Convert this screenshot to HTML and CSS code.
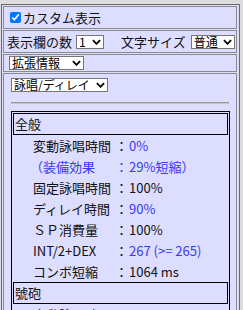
FILE: index.html
```html
<!DOCTYPE html>
<html lang="ja">
<head>
  <meta charset="UTF-8" />
  <meta name="viewport" content="width=device-width, initial-scale=1.0"/>
  <title>カスタム表示</title>
  <link rel="stylesheet" href="styles.css">
</head>
<body>
  <div class="panel">
    <div class="cell row-custom">
      <label><input type="checkbox" checked>カスタム表示</label>
    </div>

    <div class="cell row-opts">
      <span>表示欄の数</span>
      <span class="dd sel-num">
        <select><option>1</option></select>
        <svg viewBox="0 0 10 6"><path d="M1 1 L5 5 L9 1" /></svg>
      </span>
      <span class="size-label">文字サイズ</span>
      <span class="dd sel-size">
        <select><option>普通</option></select>
        <svg viewBox="0 0 10 6"><path d="M1 1 L5 5 L9 1" /></svg>
      </span>
    </div>

    <div class="cell row-ext">
      <span class="dd sel-ext">
        <select><option>拡張情報</option></select>
        <svg viewBox="0 0 10 6"><path d="M1 1 L5 5 L9 1" /></svg>
      </span>
    </div>

    <div class="cell row-body">
      <span class="dd sel-mode">
        <select><option>詠唱/ディレイ</option></select>
        <svg viewBox="0 0 10 6"><path d="M1 1 L5 5 L9 1" /></svg>
      </span>
      <hr>
      <div class="stats">
        <div class="head">全般</div>
        <div class="line"><span class="key">変動詠唱時間</span><span class="colon">：</span><span class="blue">0%</span></div>
        <div class="line blue"><span class="key paren">（装備効果</span><span class="colon">：</span><span>29%短縮）</span></div>
        <div class="line"><span class="key">固定詠唱時間</span><span class="colon">：</span><span>100%</span></div>
        <div class="line"><span class="key">ディレイ時間</span><span class="colon">：</span><span class="blue">90%</span></div>
        <div class="line"><span class="key">ＳＰ消費量</span><span class="colon">：</span><span>100%</span></div>
        <div class="line"><span class="key">INT/2+DEX</span><span class="colon">：</span><span class="blue">267 (&gt;= 265)</span></div>
        <div class="line"><span class="key">コンボ短縮</span><span class="colon">：</span><span>1064 ms</span></div>
        <div class="head">號砲</div>
        <div class="line"><span class="key">変動詠唱時間</span><span class="colon">：</span><span class="blue">0%</span></div>
      </div>
    </div>
  </div>
</body>
</html>
```

FILE: styles.css
```css
body {
  margin: 0;
  padding: 4px 0 0 1px;
  background-color: #dcdcdc;
  font-family: "Noto Sans CJK JP", "Noto Sans", sans-serif;
  font-size: 13px;
  color: #111;
  overflow: hidden;
}

.panel {
  width: 234px;
  border: 1px solid #6a6a6a;
  background-color: #ddf;
  padding: 1px 2px 1px 1px;
  display: flex;
  flex-direction: column;
  gap: 1px;
}

.cell {
  border: 1px solid #8a8a8a;
  white-space: nowrap;
}

/* プルダウン */
.dd {
  position: relative;
  display: inline-block;
  height: 14px;
  flex-shrink: 0;
}

.dd select {
  appearance: none;
  -webkit-appearance: none;
  display: block;
  width: 100%;
  height: 14px;
  font-family: "Noto Sans CJK JP", "Noto Sans", sans-serif;
  font-size: 12px;
  line-height: 12px;
  padding: 0 0 0 2px;
  border: 1px solid #767676;
  border-radius: 0;
  background-color: #fff;
  color: #000;
  margin: 0;
}

.dd svg {
  position: absolute;
  right: 3px;
  top: 4px;
  width: 9px;
  height: 6px;
  fill: none;
  stroke: #000;
  stroke-width: 2;
  pointer-events: none;
}

.row-custom {
  height: 21px;
  display: flex;
  align-items: center;
}

.row-custom label {
  display: flex;
  align-items: center;
}

.row-custom input {
  width: 11px;
  height: 11px;
  margin: 0 2px 0 6px;
}

.row-opts {
  height: 21px;
  display: flex;
  align-items: center;
  padding-left: 3px;
}

.sel-num {
  width: 28px;
  margin-left: 4px;
}

.size-label {
  margin-left: 17px;
}

.sel-size {
  width: 44px;
  margin-left: 5px;
}

.row-ext {
  height: 16px;
  display: flex;
  align-items: center;
  padding-left: 5px;
}

.sel-ext {
  width: 75px;
}

.row-body {
  padding: 4px 7px 0 7px;
}

.sel-mode {
  width: 97px;
  display: block;
}

hr {
  margin: 10px 0 7px 0;
  border: 0;
  border-top: 1px solid #9a9a9a;
  border-bottom: 1px solid #c4c4c4;
}

.stats {
  width: 215px;
  border: 1px solid #000;
  padding: 1px;
}

.head {
  height: 20px;
  line-height: 20px;
  border: 1px solid #000;
  padding-left: 1px;
}

.line {
  height: 21px;
  line-height: 21px;
  padding-left: 20px;
  display: flex;
}

.key {
  width: 82px;
  flex-shrink: 0;
}

.paren {
  margin-left: -3px;
  width: 85px;
}

.colon {
  width: 14px;
}

.blue {
  color: #3838f8;
}
```
